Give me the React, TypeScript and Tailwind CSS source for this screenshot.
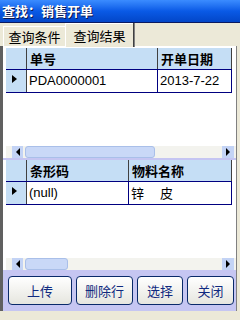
import React from "react";

const cjk = { fontFamily: '"Noto Sans CJK SC", "Liberation Sans", sans-serif' };
const lat = { fontFamily: '"Liberation Sans", "Noto Sans CJK SC", sans-serif' };

function Tri({ dir }: { dir: "l" | "r" }) {
  return (
    <svg width="6" height="8" viewBox="0 0 6 8">
      {dir === "r" ? <polygon points="1,0 5,4 1,8" fill="#000" /> : <polygon points="5,0 1,4 5,8" fill="#000" />}
    </svg>
  );
}

function HScroll({ thumbW }: { thumbW: number }) {
  return (
    <div className="flex h-[12px] items-stretch bg-[#f3f3ee] pl-[6px] pr-[2px]">
      <div className="flex w-[11px] items-center justify-center bg-[#c3d3f5]">
        <Tri dir="l" />
      </div>
      <div className="flex flex-1 items-stretch px-[2px]">
        <div className="rounded-[3px] border border-[#a9bfe9] bg-[#c9d8f7]" style={{ width: thumbW }} />
      </div>
      <div className="flex w-[12px] items-center justify-center bg-[#c3d3f5]">
        <Tri dir="r" />
      </div>
    </div>
  );
}

function Grid({ c1, c2, v1, v2, split, thumbW, latin1 }: { c1: string; c2: string; v1: string; v2: string; split: number; thumbW: number; latin1: boolean }) {
  return (
    <div className="flex h-[110px] flex-col bg-white">
      <div className="flex-1">
        <div className="flex h-[22px] border-b border-[#000080] bg-[#c5def5]" style={{ width: 226 }}>
          <div className="w-[21px] border-r border-[#404040]" />
          <div className="flex items-center border-r border-[#404040] pl-[3px] text-[13px] font-bold text-black" style={{ ...cjk, width: split }}>
            {c1}
          </div>
          <div className="flex flex-1 items-center border-r border-[#404040] pl-[3px] text-[13px] font-bold text-black" style={cjk}>
            {c2}
          </div>
        </div>
        <div className="flex h-[23px] border-b border-[#000080]" style={{ width: 226 }}>
          <div className="flex w-[21px] items-center justify-center border-r border-[#404040] bg-[#c5def5] pb-[4px] pr-[3px]">
            <svg width="5" height="8" viewBox="0 0 5 8"><polygon points="0,0 5,4 0,8" fill="#000" /></svg>
          </div>
          <div className="flex items-center border-r border-[#000080] pl-[2px] text-[13px] text-black" style={{ ...(latin1 ? lat : cjk), width: split }}>
            {v1}
          </div>
          <div className="flex flex-1 items-center border-r border-[#000080] pl-[2px] text-[13px] text-black" style={v2.startsWith("2") ? lat : cjk}>
            {v2}
          </div>
        </div>
      </div>
      <HScroll thumbW={thumbW} />
    </div>
  );
}

function Btn({ label, w }: { label: string; w: number }) {
  return (
    <div
      className="flex h-[29px] items-center justify-center rounded-[4px] border border-[#0a2a6a] bg-gradient-to-b from-[#ffffff] to-[#e6e6df] text-[13px] text-[#102a80]"
      style={{ ...cjk, width: w }}
    >
      {label}
    </div>
  );
}

export default function App() {
  return (
    <div className="h-[320px] w-[240px] overflow-hidden bg-[#ece9d8]">
      <div
        className="flex h-[23px] items-center border-b border-[#0a1a60] bg-gradient-to-b from-[#3b8cff] via-[#0a5ae6] to-[#0346c8] pl-[2px] text-[13px] font-bold text-white"
        style={{ ...cjk, textShadow: "1px 1px 0 #0a1850" }}
      >
        查找：销售开单
      </div>
      <div className="relative h-[23px]">
        <div className="absolute left-[3px] top-[3px] flex h-[20px] w-[62px] items-center justify-center border-l border-t border-white bg-[#ece9d8] text-[13px] text-black" style={{ ...cjk, boxShadow: "1px 0 0 #808080" }}>
          查询条件
        </div>
        <div className="absolute left-[65px] top-0 flex h-[24px] w-[68px] items-start justify-center border-l border-t border-white bg-[#ece9d8] pt-[2px] text-[13px] text-black" style={{ ...cjk, boxShadow: "1px 0 0 #404040, 2px 0 0 #808080" }}>
          查询结果
        </div>
      </div>
      <div className="mr-[3px] flex h-[265px] flex-col border-l-[3px] border-r border-l-[#606060] border-r-[#808080] bg-white pt-[2px]">
        <div className="pl-[3px]">
          <Grid c1="单号" c2="开单日期" v1="PDA0000001" v2="2013-7-22" split={131} thumbW={130} latin1 />
        </div>
        <div className="h-[2px] bg-[#c5c5f2]" />
        <div className="pl-[3px]">
          <Grid c1="条形码" c2="物料名称" v1="(null)" v2="锌　 皮" split={102} thumbW={43} latin1 />
        </div>
        <div className="flex h-[41px] items-center gap-[4px] bg-[#c6c6f2] pl-[5px]">
          <Btn label="上传" w={64} />
          <Btn label="删除行" w={57} />
          <Btn label="选择" w={46} />
          <Btn label="关闭" w={47} />
        </div>
      </div>
    </div>
  );
}
